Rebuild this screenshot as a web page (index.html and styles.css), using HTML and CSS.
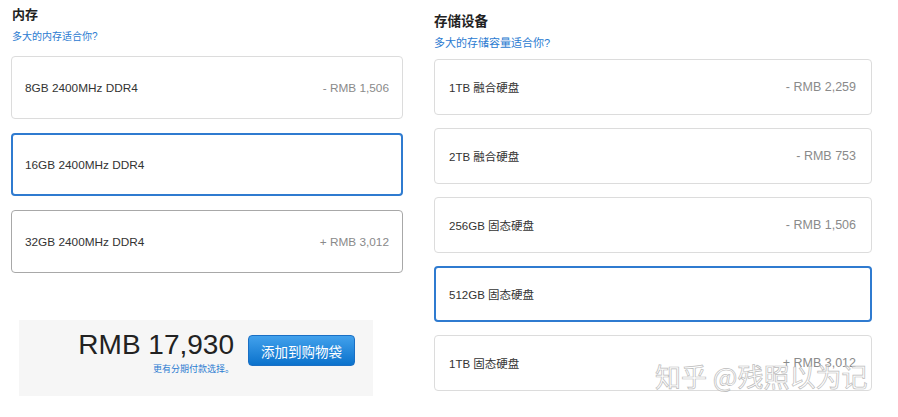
FILE: index.html
```html
<!DOCTYPE html>
<html lang="zh-CN">
<head>
<meta charset="utf-8">
<title>配置</title>
<link rel="stylesheet" href="styles.css">
</head>
<body>
<main class="page">
  <section class="col col-memory">
    <h2 class="title">内存</h2>
    <a class="help">多大的内存适合你?</a>
    <ul class="options">
      <li class="option"><span class="name">8GB 2400MHz DDR4</span><span class="price">- RMB 1,506</span></li>
      <li class="option selected"><span class="name">16GB 2400MHz DDR4</span></li>
      <li class="option hover"><span class="name">32GB 2400MHz DDR4</span><span class="price">+ RMB 3,012</span></li>
    </ul>
    <div class="summary">
      <div class="total">
        <div class="amount">RMB 17,930</div>
        <a class="finance">更有分期付款选择。</a>
      </div>
      <button class="add">添加到购物袋</button>
    </div>
  </section>
  <section class="col col-storage">
    <h2 class="title">存储设备</h2>
    <a class="help">多大的存储容量适合你?</a>
    <ul class="options">
      <li class="option"><span class="name">1TB 融合硬盘</span><span class="price">- RMB 2,259</span></li>
      <li class="option"><span class="name">2TB 融合硬盘</span><span class="price">- RMB 753</span></li>
      <li class="option"><span class="name">256GB 固态硬盘</span><span class="price">- RMB 1,506</span></li>
      <li class="option selected"><span class="name">512GB 固态硬盘</span></li>
      <li class="option"><span class="name">1TB 固态硬盘</span><span class="price">+ RMB 3,012</span></li>
    </ul>
  </section>
</main>
<div class="watermark">知乎 @残照以为记</div>
</body>
</html>
```

FILE: styles.css
```css
* { box-sizing: border-box; }
html, body { margin: 0; padding: 0; background: #fff; }
body {
  font-family: "Liberation Sans", "Noto Sans CJK SC", sans-serif;
  color: #333;
  width: 898px;
  height: 417px;
  overflow: hidden;
  position: relative;
}
.page {
  display: flex;
  gap: 31px;
  padding-left: 11px;
}
.col { display: flex; flex-direction: column; }
.col-memory { width: 392px; padding-top: 6px; }
.col-storage { width: 438px; padding-top: 13px; }
.title {
  margin: 0;
  font-size: 13px;
  line-height: 18px;
  font-weight: bold;
  color: #222;
  padding-left: 1px;
}
.col-storage .title { font-size: 13.5px; padding-left: 0; }
.help {
  display: block;
  color: #2b7bd1;
  font-size: 10px;
  line-height: 14px;
  margin-top: 6px;
  padding-left: 1px;
}
.col-storage .help { font-size: 11px; margin-top: 5px; padding-left: 0; }
.options {
  list-style: none;
  margin: 12px 0 0;
  padding: 0;
  display: flex;
  flex-direction: column;
  gap: 14px;
}
.col-storage .options { margin-top: 9px; gap: 13px; }
.option {
  height: 63px;
  border: 1px solid #dcdcdc;
  border-radius: 4px;
  display: flex;
  align-items: center;
  justify-content: space-between;
  padding: 0 13px 0 13px;
  font-size: 11.8px;
}
.col-storage .option { height: 56px; padding: 0 15px 0 14px; font-size: 11.5px; }
.option.selected { border: 2px solid #2f7bd0; padding-left: 12px; }
.col-storage .option.selected { padding-left: 13px; }
.option.hover { border-color: #a8a8a8; }
.name { color: #333; }
.price { color: #8a8a8a; }
.col-storage .price { font-size: 12.5px; }
.summary {
  margin: 47px 0 0 8px;
  width: 354px;
  height: 76px;
  background: #f6f6f6;
  display: flex;
  justify-content: flex-end;
  align-items: flex-start;
  gap: 14px;
  padding: 15px 18px 0 0;
}
.total {
  display: flex;
  flex-direction: column;
  align-items: flex-end;
  margin-top: -5px;
}
.amount {
  font-size: 28px;
  line-height: 30px;
  color: #222;
}
.finance {
  color: #2b7bd1;
  font-size: 9px;
  line-height: 12px;
  margin-top: 3px;
}
.add {
  width: 107px;
  height: 31px;
  border: 1px solid #1a6fc4;
  border-radius: 4px;
  background: linear-gradient(#42a1ec, #0b72cc);
  color: #fff;
  font-family: "Noto Sans CJK SC", sans-serif;
  font-size: 13.5px;
  padding: 0;
}
.watermark {
  position: absolute;
  left: 655px;
  top: 360px;
  font-family: "Noto Sans CJK SC", sans-serif;
  font-size: 26px;
  line-height: 32px;
  color: rgba(255, 255, 255, 0.5);
  -webkit-text-stroke: 0.7px #bcbcbc;
  white-space: nowrap;
}
```
